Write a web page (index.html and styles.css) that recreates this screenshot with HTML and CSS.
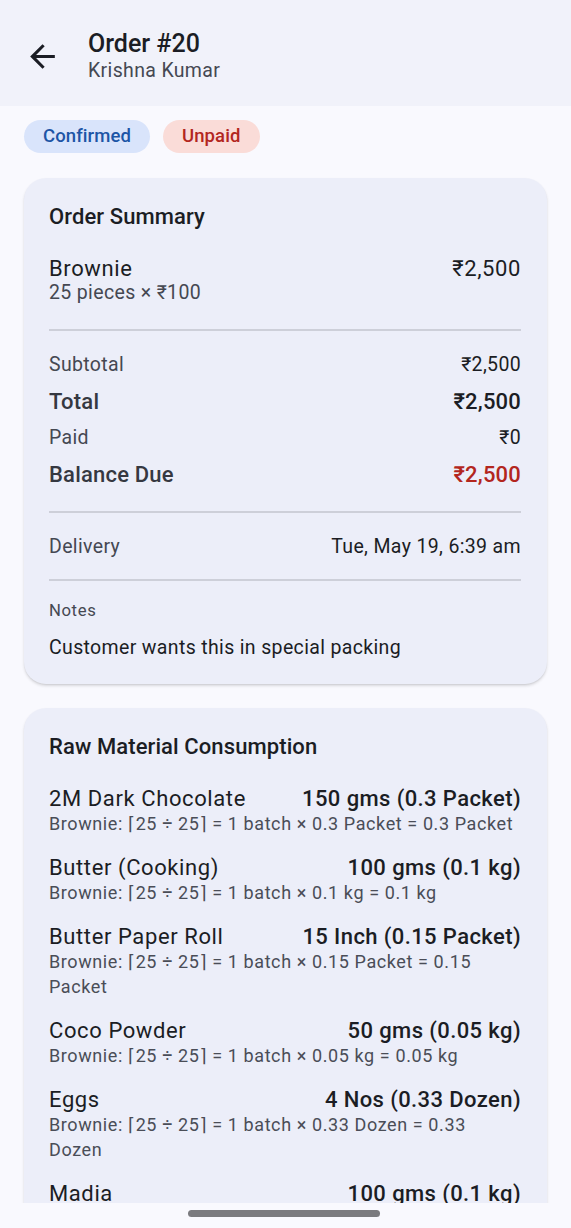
FILE: index.html
```html
<!DOCTYPE html>
<html lang="en">
<head>
  <meta charset="UTF-8">
  <title>Order #20</title>
  <link rel="stylesheet" href="styles.css">
</head>
<body>

<div class="screen">
  <header class="top-bar">
    <svg class="back-icon" viewBox="0 0 24 24" width="37" height="37">
      <path d="M20 11H7.83l5.59-5.59L12 4l-8 8 8 8 1.41-1.41L7.83 13H20v-2z" fill="#1b1d24"/>
    </svg>
    <div class="title-block">
      <div class="title">Order #20</div>
      <div class="subtitle">Krishna Kumar</div>
    </div>
  </header>

  <main class="content">
    <div class="chips">
      <span class="chip chip-blue">Confirmed</span>
      <span class="chip chip-red">Unpaid</span>
    </div>

    <section class="card">
      <h2 class="card-title">Order Summary</h2>

      <div class="item-row">
        <div>
          <div class="item-name">Brownie</div>
          <div class="item-sub">25 pieces × ₹100</div>
        </div>
        <div class="item-price">₹2,500</div>
      </div>

      <div class="divider first"></div>

      <div class="totals">
        <div class="line small"><span class="label">Subtotal</span><span>₹2,500</span></div>
        <div class="line big"><span class="label">Total</span><span>₹2,500</span></div>
        <div class="line small"><span class="label">Paid</span><span>₹0</span></div>
        <div class="line big"><span class="label">Balance Due</span><span class="due">₹2,500</span></div>
      </div>

      <div class="divider"></div>

      <div class="line small"><span class="label">Delivery</span><span>Tue, May 19, 6:39 am</span></div>

      <div class="divider tight"></div>

      <div class="notes-label">Notes</div>
      <div class="notes-text">Customer wants this in special packing</div>
    </section>

    <section class="card">
      <h2 class="card-title">Raw Material Consumption</h2>

      <div class="materials">
        <div class="material">
          <div class="material-head"><span class="material-name">2M Dark Chocolate</span><span class="material-qty">150 gms (0.3 Packet)</span></div>
          <div class="formula">Brownie: ⌈25 ÷ 25⌉ = 1 batch × 0.3 Packet = 0.3 Packet</div>
        </div>
        <div class="material">
          <div class="material-head"><span class="material-name">Butter (Cooking)</span><span class="material-qty">100 gms (0.1 kg)</span></div>
          <div class="formula">Brownie: ⌈25 ÷ 25⌉ = 1 batch × 0.1 kg = 0.1 kg</div>
        </div>
        <div class="material">
          <div class="material-head"><span class="material-name">Butter Paper Roll</span><span class="material-qty">15 Inch (0.15 Packet)</span></div>
          <div class="formula">Brownie: ⌈25 ÷ 25⌉ = 1 batch × 0.15 Packet = 0.15 Packet</div>
        </div>
        <div class="material">
          <div class="material-head"><span class="material-name">Coco Powder</span><span class="material-qty">50 gms (0.05 kg)</span></div>
          <div class="formula">Brownie: ⌈25 ÷ 25⌉ = 1 batch × 0.05 kg = 0.05 kg</div>
        </div>
        <div class="material">
          <div class="material-head"><span class="material-name">Eggs</span><span class="material-qty">4 Nos (0.33 Dozen)</span></div>
          <div class="formula">Brownie: ⌈25 ÷ 25⌉ = 1 batch × 0.33 Dozen = 0.33 Dozen</div>
        </div>
        <div class="material">
          <div class="material-head"><span class="material-name">Madia</span><span class="material-qty">100 gms (0.1 kg)</span></div>
          <div class="formula">Brownie: ⌈25 ÷ 25⌉ = 1 batch × 0.1 kg = 0.1 kg</div>
        </div>
      </div>
    </section>
  </main>

  <div class="nav-bar"><div class="handle"></div></div>
</div>

</body>
</html>
```

FILE: styles.css
```css
* {
  box-sizing: border-box;
}
body {
  margin: 0;
  font-family: Roboto, "Noto Sans", "DejaVu Sans", sans-serif;
  color: #1b1d24;
  background: #f9f9fe;
}
.screen {
  height: 1228px;
  display: flex;
  flex-direction: column;
  overflow: hidden;
}
.top-bar {
  height: 106px;
  flex-shrink: 0;
  background: #f1f2fa;
  display: flex;
  align-items: center;
  padding: 6px 0 0 24px;
}
.back-icon {
  display: block;
}
.title-block {
  margin-left: 27px;
}
.title {
  font-size: 25px;
  font-weight: 500;
  line-height: 30px;
}
.subtitle {
  font-size: 19.5px;
  line-height: 24px;
  letter-spacing: 0.35px;
  color: #454852;
}
.content {
  flex: 1;
  overflow: hidden;
  padding: 14px 24px 0;
}
.chips {
  display: flex;
  gap: 13px;
}
.chip {
  height: 33px;
  line-height: 33px;
  padding: 0 19px;
  border-radius: 17px;
  font-size: 18.5px;
  font-weight: 500;
  letter-spacing: 0.1px;
}
.chip-blue {
  background: #d9e4fb;
  color: #1d55a6;
}
.chip-red {
  background: #fadcd8;
  color: #b3261e;
}
.card {
  margin-top: 25px;
  background: #eceef9;
  border-radius: 22px;
  padding: 24px 26px 22px 25px;
  box-shadow: 0 2px 3px rgba(0, 0, 0, 0.13), 0 1px 1px rgba(0, 0, 0, 0.05);
}
.card + .card {
  margin-top: 24px;
}
.card-title {
  margin: 0;
  font-size: 22px;
  font-weight: 500;
  line-height: 30px;
  letter-spacing: 0.1px;
}
.item-row {
  margin-top: 24px;
  display: flex;
  justify-content: space-between;
  align-items: flex-start;
}
.item-name, .item-price {
  font-size: 22px;
  line-height: 25px;
  letter-spacing: 0.6px;
}
.item-sub {
  font-size: 19.5px;
  line-height: 24px;
  letter-spacing: 0.35px;
  color: #454852;
}
.divider {
  height: 2px;
  background: #cdcfd9;
  margin: 20px 0;
}
.divider.first {
  margin: 24px 0 20px;
}
.divider.tight {
  margin: 18px 0 20px;
}
.totals {
  display: flex;
  flex-direction: column;
  gap: 6px;
}
.line {
  display: flex;
  justify-content: space-between;
}
.line.small {
  font-size: 19.5px;
  line-height: 28px;
  letter-spacing: 0.35px;
}
.line.big {
  font-size: 22px;
  font-weight: 500;
  line-height: 33px;
  letter-spacing: 0.2px;
}
.label {
  color: #454852;
}
.line.big .label {
  color: #353841;
}
.due {
  color: #b3261e;
}
.notes-label {
  margin-top: -1px;
  font-size: 16.7px;
  line-height: 22px;
  letter-spacing: 0.6px;
  color: #454852;
}
.notes-text {
  margin-top: 12px;
  font-size: 19.5px;
  line-height: 28px;
  letter-spacing: 0.35px;
}
.materials {
  margin-top: 24px;
  display: flex;
  flex-direction: column;
  gap: 19px;
}
.material-head {
  display: flex;
  justify-content: space-between;
  line-height: 25px;
  font-size: 22px;
}
.material-name {
  letter-spacing: 0.6px;
}
.material-qty {
  font-weight: 500;
  letter-spacing: 0.4px;
}
.formula {
  font-size: 18px;
  line-height: 25px;
  letter-spacing: 0.6px;
  color: #4a4d57;
}
.nav-bar {
  height: 25px;
  flex-shrink: 0;
  background: #f9f9fe;
  padding-top: 7px;
}
.handle {
  width: 192px;
  height: 7px;
  margin-left: 188px;
  border-radius: 4px;
  background: #7b7b7f;
}
```
